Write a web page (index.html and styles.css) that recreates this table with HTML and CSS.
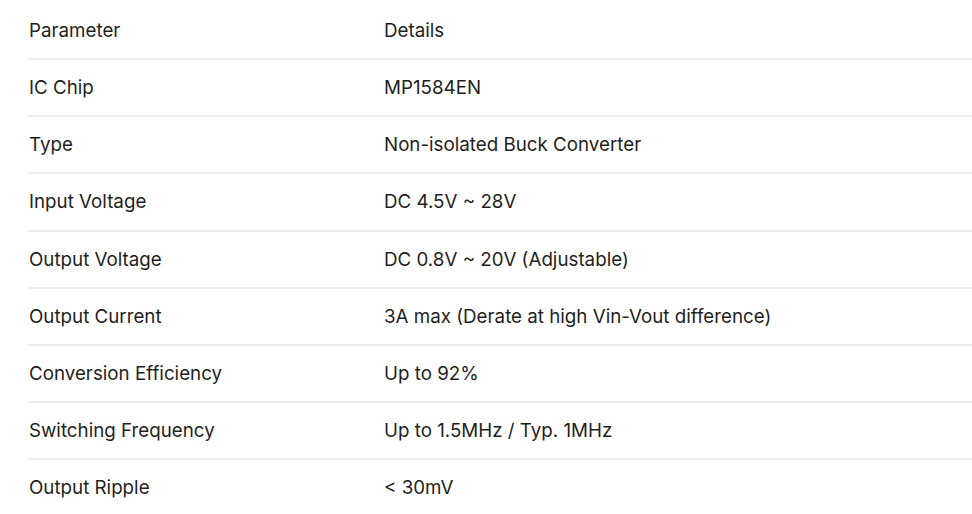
FILE: index.html
```html
<!DOCTYPE html>
<html lang="en">
<head>
<meta charset="utf-8">
<title>Specifications</title>
<link rel="stylesheet" href="styles.css">
</head>
<body>
<div class="page">
  <table class="spec">
    <thead>
      <tr><th>Parameter</th><th>Details</th></tr>
    </thead>
    <tbody>
      <tr><td>IC Chip</td><td>MP1584EN</td></tr>
      <tr><td>Type</td><td>Non-isolated Buck Converter</td></tr>
      <tr><td>Input Voltage</td><td>DC 4.5V ~ 28V</td></tr>
      <tr><td>Output Voltage</td><td>DC 0.8V ~ 20V (Adjustable)</td></tr>
      <tr><td>Output Current</td><td>3A max (Derate at high Vin-Vout difference)</td></tr>
      <tr><td>Conversion Efficiency</td><td>Up to 92%</td></tr>
      <tr><td>Switching Frequency</td><td>Up to 1.5MHz / Typ. 1MHz</td></tr>
      <tr><td>Output Ripple</td><td>&lt; 30mV</td></tr>
    </tbody>
  </table>
</div>
</body>
</html>
```

FILE: styles.css
```css
html, body {
  margin: 0;
  padding: 0;
  background: #ffffff;
}
.page {
  padding: 2px 0 0 28px;
  overflow: hidden;
}
.spec {
  border-collapse: collapse;
  width: 1000px;
  font-family: Inter, "Noto Sans", sans-serif;
  font-size: 18.75px;
  color: #1f1f1f;
}
.spec th,
.spec td {
  text-align: left;
  font-weight: 400;
  height: 57.14px;
  padding: 0 16px 0 1px;
  box-sizing: border-box;
  border-bottom: 2px solid #eeeeee;
  vertical-align: middle;
}
.spec th:first-child,
.spec td:first-child {
  width: 355px;
}
```
